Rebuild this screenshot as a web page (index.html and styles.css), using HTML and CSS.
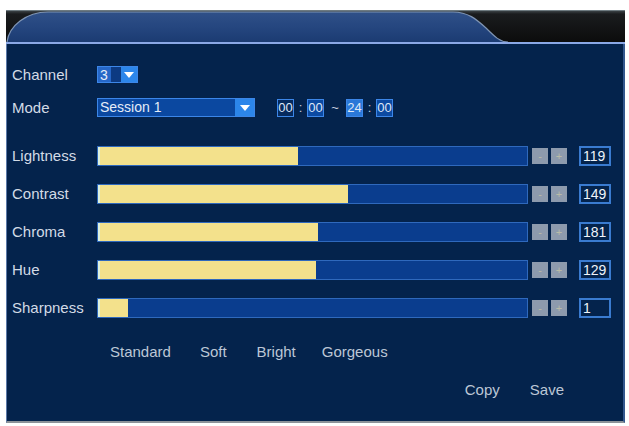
FILE: index.html
```html
<!DOCTYPE html>
<html>
<head>
<meta charset="utf-8">
<link rel="stylesheet" href="styles.css">
</head>
<body>
<div class="frame">
  <div class="topbar">
    <svg class="tab" width="619" height="32" viewBox="0 0 619 32">
      <defs>
        <linearGradient id="tg" x1="0" y1="0" x2="0" y2="1">
          <stop offset="0" stop-color="#2f5088"/>
          <stop offset="0.5" stop-color="#25467f"/>
          <stop offset="1" stop-color="#1b3b72"/>
        </linearGradient>
      </defs>
      <path d="M1,32 C3,16 20,2 42,2 L447,2 C462,2 470,9 480,18 C489,27 494,32 502,32 Z" fill="url(#tg)"/>
      <path d="M1,32 C3,16 20,2 42,2 L447,2 C462,2 470,9 480,18 C489,27 494,32 502,32" fill="none" stroke="#7f95b4" stroke-width="1.2"/>
    </svg>
  </div>
  <div class="divider"></div>
  <div class="panel">
    <div class="row top-row">
      <span class="label">Channel</span>
      <div class="select small">
        <span class="sel-value ch">3</span>
        <span class="sel-arrow"><svg width="10" height="6" viewBox="0 0 10 6"><path d="M0,0 L10,0 L5,6 Z" fill="#fff"/></svg></span>
      </div>
    </div>
    <div class="row mode-row">
      <span class="label">Mode</span>
      <div class="select wide">
        <span class="sel-value">Session 1</span>
        <span class="sel-arrow"><svg width="10" height="6" viewBox="0 0 10 6"><path d="M0,0 L10,0 L5,6 Z" fill="#fff"/></svg></span>
      </div>
      <div class="time">
        <span class="tbox dark">00</span><span class="sep">:</span>
        <span class="tbox">00</span><span class="sep tilde">~</span>
        <span class="tbox sel">24</span><span class="sep">:</span>
        <span class="tbox">00</span>
      </div>
    </div>
    <div class="sliders">
      <div class="slider">
        <span class="label">Lightness</span>
        <div class="bar"><div class="fill" style="width:200px"></div></div>
        <span class="btn">-</span><span class="btn">+</span>
        <span class="val">119</span>
      </div>
      <div class="slider">
        <span class="label">Contrast</span>
        <div class="bar"><div class="fill" style="width:250px"></div></div>
        <span class="btn">-</span><span class="btn">+</span>
        <span class="val">149</span>
      </div>
      <div class="slider">
        <span class="label">Chroma</span>
        <div class="bar"><div class="fill" style="width:220px"></div></div>
        <span class="btn">-</span><span class="btn">+</span>
        <span class="val">181</span>
      </div>
      <div class="slider">
        <span class="label">Hue</span>
        <div class="bar"><div class="fill" style="width:218px"></div></div>
        <span class="btn">-</span><span class="btn">+</span>
        <span class="val">129</span>
      </div>
      <div class="slider">
        <span class="label">Sharpness</span>
        <div class="bar"><div class="fill" style="width:30px"></div></div>
        <span class="btn">-</span><span class="btn">+</span>
        <span class="val">1</span>
      </div>
    </div>
    <div class="presets">
      <span>Standard</span><span>Soft</span><span>Bright</span><span>Gorgeous</span>
    </div>
    <div class="actions">
      <span>Copy</span><span>Save</span>
    </div>
  </div>
</div>
</body>
</html>
```

FILE: styles.css
```css
* { box-sizing: border-box; }
body {
  margin: 0;
  background: #ffffff;
  font-family: "Liberation Sans", Arial, sans-serif;
  font-size: 15px;
  color: #d3dbe6;
}
.frame {
  margin: 10px 0 0 6px;
  width: 619px;
}
.topbar {
  height: 32px;
  background: linear-gradient(#3a4145 0, #1a1c1e 3px, #0c0c0c 100%);
  border-top: 1px solid #6d7a80;
  overflow: hidden;
}
.tab { display: block; margin-top: -1px; }
.divider {
  height: 2px;
  background: #8aa8e6;
}
.panel {
  height: 379px;
  background: #04234c;
  border-left: 1px solid #5a78a8;
  border-right: 2px solid #34588e;
  border-bottom: 2px solid #8c9299;
  padding: 22px 0 0 5px;
}
.row {
  display: flex;
  align-items: center;
}
.label {
  width: 85px;
  flex: none;
  line-height: 18px;
}
.top-row { height: 17px; }
.mode-row { height: 19px; margin-top: 15px; }
.select {
  display: flex;
  height: 100%;
  border: 1px solid #3c86e8;
  background: #0b48a0;
}
.select.small { width: 41px; }
.select.wide { width: 158px; }
.sel-value {
  flex: 1;
  color: #e4ecf8;
  font-size: 14px;
  line-height: 16px;
  padding-left: 2px;
}
.sel-value.ch {
  background: linear-gradient(90deg, #2667c8 0, #2667c8 55%, #0c3a82 55%);
}
.sel-arrow {
  width: 19px;
  flex: none;
  background: #2c86ea;
  display: flex;
  align-items: center;
  justify-content: center;
}
.select.small .sel-arrow { width: 16px; }
.time {
  display: flex;
  align-items: center;
  margin-left: 22px;
  height: 18px;
}
.tbox {
  width: 17px;
  height: 18px;
  border: 1px solid #3c86e8;
  background: #0c4aa2;
  color: #dfe8f6;
  font-size: 13px;
  line-height: 16px;
  text-align: center;
}
.tbox.dark { background: #062a5e; }
.tbox.sel { background: #2a78d8; }
.sep {
  width: 13px;
  text-align: center;
  font-size: 13px;
  color: #c8d2e0;
}
.sep.tilde { width: 22px; }
.sliders {
  margin-top: 29px;
  display: flex;
  flex-direction: column;
  gap: 18px;
}
.slider {
  display: flex;
  align-items: center;
  height: 20px;
}
.bar {
  width: 431px;
  height: 20px;
  flex: none;
  border: 1px solid #2f69bd;
  background: #0a3d8e;
}
.fill {
  height: 100%;
  background: #f3e18c;
  box-shadow: inset 2px 0 0 #def1dc;
}
.btn {
  width: 16px;
  height: 16px;
  flex: none;
  background: #8d9aad;
  color: #b9bba8;
  font-size: 11px;
  line-height: 16px;
  text-align: center;
  margin-left: 3px;
}
.bar + .btn { margin-left: 4px; }
.val {
  width: 32px;
  height: 20px;
  flex: none;
  margin-left: 12px;
  border: 2px solid #3a7bd0;
  background: #04234c;
  color: #f0f4fa;
  font-size: 14px;
  line-height: 16px;
  padding-left: 2px;
}
.presets {
  display: flex;
  margin-top: 25px;
  padding-left: 98px;
  line-height: 18px;
  color: #bcc7d6;
}
.presets span:nth-child(2) { margin-left: 29px; }
.presets span:nth-child(3) { margin-left: 30px; }
.presets span:nth-child(4) { margin-left: 26px; }
.actions {
  display: flex;
  justify-content: flex-end;
  gap: 30px;
  margin-top: 20px;
  padding-right: 59px;
  line-height: 18px;
  color: #bcc7d6;
}
```
